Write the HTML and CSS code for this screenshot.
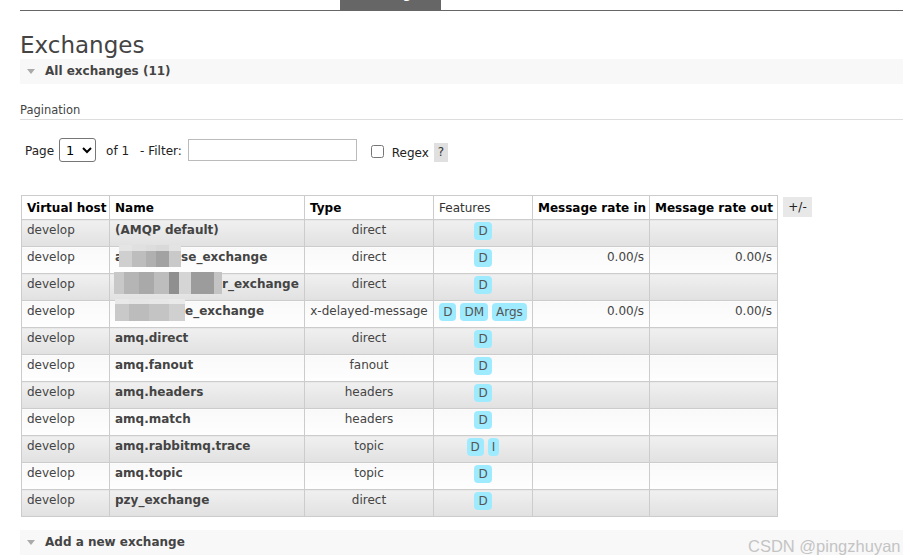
FILE: index.html
```html
<!DOCTYPE html>
<html>
<head>
<meta charset="utf-8">
<title>Exchanges</title>
<link rel="stylesheet" href="styles.css">
</head>
<body>
<nav class="topnav">
  <div class="nav-left"></div>
  <span class="tab active"><span class="tab-text">Exchanges</span></span>
  <span class="tab"><span class="tab-text">Queues and Streams</span></span>
</nav>
<main class="main">
  <h1 class="title">Exchanges</h1>
  <div class="section-bar"><span class="tri"></span><span>All exchanges (11)</span></div>
  <h3 class="pag-title">Pagination</h3>
  <div class="pag-row">
    <span class="lbl">Page</span>
    <select class="page-select"><option>1</option></select>
    <span class="of">of 1</span>
    <span class="filter-lbl">- Filter:</span>
    <input class="filter-input" type="text">
    <input class="regex-cb" type="checkbox">
    <span class="regex">Regex</span>
    <span class="help">?</span>
  </div>
  <div class="table-wrap">
    <table class="list">
      <colgroup>
        <col class="c-vhost"><col class="c-name"><col class="c-type"><col class="c-feat"><col class="c-rin"><col class="c-rout">
      </colgroup>
      <thead>
        <tr><th>Virtual host</th><th>Name</th><th>Type</th><th class="feat-h">Features</th><th>Message rate in</th><th>Message rate out</th></tr>
      </thead>
      <tbody>
        <tr class="alt1"><td class="vhost">develop</td><td class="name">(AMQP default)</td><td class="type">direct</td><td><div class="feats"><span class="badge">D</span></div></td><td class="rate"></td><td class="rate"></td></tr>
        <tr class="alt2"><td class="vhost">develop</td><td class="name">a<span class="mosaic m2"></span>se_exchange</td><td class="type">direct</td><td><div class="feats"><span class="badge">D</span></div></td><td class="rate">0.00/s</td><td class="rate">0.00/s</td></tr>
        <tr class="alt1"><td class="vhost">develop</td><td class="name"><span class="mosaic m3"></span>r_exchange</td><td class="type">direct</td><td><div class="feats"><span class="badge">D</span></div></td><td class="rate"></td><td class="rate"></td></tr>
        <tr class="alt2"><td class="vhost">develop</td><td class="name"><span class="mosaic m4"></span>e_exchange</td><td class="type">x-delayed-message</td><td><div class="feats"><span class="badge">D</span><span class="badge">DM</span><span class="badge">Args</span></div></td><td class="rate">0.00/s</td><td class="rate">0.00/s</td></tr>
        <tr class="alt1"><td class="vhost">develop</td><td class="name">amq.direct</td><td class="type">direct</td><td><div class="feats"><span class="badge">D</span></div></td><td class="rate"></td><td class="rate"></td></tr>
        <tr class="alt2"><td class="vhost">develop</td><td class="name">amq.fanout</td><td class="type">fanout</td><td><div class="feats"><span class="badge">D</span></div></td><td class="rate"></td><td class="rate"></td></tr>
        <tr class="alt1"><td class="vhost">develop</td><td class="name">amq.headers</td><td class="type">headers</td><td><div class="feats"><span class="badge">D</span></div></td><td class="rate"></td><td class="rate"></td></tr>
        <tr class="alt2"><td class="vhost">develop</td><td class="name">amq.match</td><td class="type">headers</td><td><div class="feats"><span class="badge">D</span></div></td><td class="rate"></td><td class="rate"></td></tr>
        <tr class="alt1"><td class="vhost">develop</td><td class="name">amq.rabbitmq.trace</td><td class="type">topic</td><td><div class="feats"><span class="badge">D</span><span class="badge">I</span></div></td><td class="rate"></td><td class="rate"></td></tr>
        <tr class="alt2"><td class="vhost">develop</td><td class="name">amq.topic</td><td class="type">topic</td><td><div class="feats"><span class="badge">D</span></div></td><td class="rate"></td><td class="rate"></td></tr>
        <tr class="alt1"><td class="vhost">develop</td><td class="name">pzy_exchange</td><td class="type">direct</td><td><div class="feats"><span class="badge">D</span></div></td><td class="rate"></td><td class="rate"></td></tr>
      </tbody>
    </table>
    <span class="plusminus">+/-</span>
  </div>
  <div class="section-bar bottom-bar"><span class="tri"></span><span>Add a new exchange</span></div>
</main>
<div class="watermark">CSDN @pingzhuyan</div>
</body>
</html>
```

FILE: styles.css
```css
* { box-sizing: border-box; }
html, body { margin: 0; padding: 0; background: #fff; }
body {
  font-family: "DejaVu Sans", Verdana, sans-serif;
  font-size: 12px;
  color: #444;
  position: relative;
  height: 559px;
  overflow: hidden;
}

/* top navigation (mostly scrolled out of view) */
.topnav {
  display: flex;
  margin-left: 20px;
  height: 11px;
  border-bottom: 1px solid #666;
  overflow: hidden;
  font-weight: bold;
  line-height: 17px;
  color: #444;
}
.nav-left { width: 320px; flex: none; }
.tab { display: block; height: 10px; padding: 0 20px; white-space: nowrap; overflow: hidden; }
.tab-text { display: block; margin-top: -14px; }
.tab.active { width: 101px; padding: 0; text-align: center; background: #666; color: #fff; }

.main { padding-left: 20px; }

.title {
  margin: 21px 0 0;
  font-size: 23px;
  line-height: 27px;
  font-weight: normal;
  color: #444;
}

.section-bar {
  display: flex;
  align-items: center;
  height: 25px;
  padding: 0 0 0 7px;
  background: #f8f8f8;
  font-weight: bold;
  line-height: 15px;
  color: #444;
}
.tri {
  width: 0; height: 0;
  border-left: 4px solid transparent;
  border-right: 4px solid transparent;
  border-top: 5px solid #aaa;
  margin-right: 10px;
}
.bottom-bar { margin-top: 13px; }

.pag-title {
  margin: 19px 0 0;
  font-size: 11.5px;
  line-height: 14px;
  padding-bottom: 2px;
  border-bottom: 1px solid #ddd;
  font-weight: normal;
  color: #444;
}

.pag-row {
  display: flex;
  align-items: center;
  height: 24px;
  margin: 18px 0 0 5px;
  color: #222;
  line-height: 17px;
}
.lbl, .of, .filter-lbl { margin-top: 2px; }
.page-select {
  margin: 0 0 0 5px;
  width: 37px;
  height: 24px;
  font-family: "DejaVu Sans", Verdana, sans-serif;
  font-size: 13px;
  border: 1px solid #767676;
  border-radius: 3px;
  background: #fff;
  color: #000;
  padding: 0 0 0 2px;
}
.of { margin-left: 10px; }
.filter-lbl { margin-left: 11px; }
.filter-input {
  margin: 0 0 0 6px;
  width: 169px;
  height: 22px;
  border: 1px solid #bbb;
  border-radius: 0;
  padding: 0 3px;
}
.regex-cb { margin: 3px 0 0 14px; width: 13px; height: 13px; }
.regex { margin: 6px 0 0 8px; }
.help {
  margin: 5px 0 0 5px;
  width: 14px;
  height: 19px;
  background: #e0e0e0;
  display: flex;
  align-items: center;
  justify-content: center;
  color: #333;
}

/* table */
.table-wrap {
  display: flex;
  align-items: flex-start;
  margin: 33px 0 0 1px;
}
table.list {
  border-collapse: collapse;
  table-layout: fixed;
  width: 756px;
  font-size: 12px;
}
.c-vhost { width: 88px; }
.c-name { width: 195px; }
.c-type { width: 129px; }
.c-feat { width: 99px; }
.c-rin { width: 117px; }
.c-rout { width: 128px; }

table.list th, table.list td {
  border: 1px solid #ccc;
  padding: 0 5px;
}
table.list th {
  height: 24px;
  line-height: 17px;
  background: #fff;
  color: #000;
  font-weight: bold;
  text-align: left;
  white-space: nowrap;
  vertical-align: middle;
  padding-top: 1px;
}
table.list th.feat-h { font-weight: normal; color: #333; }
table.list td {
  height: 27px;
  padding: 2px 5px 0;
  line-height: 17px;
  vertical-align: top;
  white-space: nowrap;
  color: #444;
}
.alt1 td { background: linear-gradient(#f0f0f0, #e1e1e1); }
.alt2 td { background: linear-gradient(#f9f9f9, #fefefe); }
td.vhost { color: #555; }
td.name { font-weight: bold; color: #000; }
td.type { text-align: center; }
td.rate { text-align: right; }

.feats { display: flex; justify-content: center; gap: 4px; margin-top: 0; }
.badge {
  display: block;
  background: #9eebff;
  color: #555;
  border-radius: 4px;
  padding: 0 4px;
  line-height: 18px;
  height: 18px;
  font-weight: normal;
}

.mosaic {
  display: inline-block;
  height: 22px;
  margin-top: -6px;
  margin-bottom: -6px;
  vertical-align: baseline;
}
.m2 {
  width: 62px;
  margin-left: -4px;
  background:
    linear-gradient(rgba(236,236,236,0.75) 0 6px, transparent 6px),
    linear-gradient(90deg, #cfcfcf 0 13px, #bdbdbd 13px 27px, #b0b0b0 27px 37px, #a2a2a2 37px 50px, #c9c9c9 50px);
}
.m3 {
  width: 108px;
  margin-left: -1px;
  background:
    linear-gradient(90deg, #c8c8c8 0 10px, #b5b5b5 10px 25px, #a9a9a9 25px 40px, #bdbdbd 40px 55px, #8f8f8f 55px 65px, #d5d5d5 65px 77px, #9c9c9c 77px 100px, #c4c4c4 100px);
}
.m4 {
  width: 70px;
  background:
    linear-gradient(rgba(240,240,240,0.8) 0 5px, transparent 5px),
    linear-gradient(90deg, #c9c9c9 0 14px, #bcbcbc 14px 34px, #c4c4c4 34px 54px, #d0d0d0 54px);
}

.plusminus {
  margin: 2px 0 0 5px;
  width: 29px;
  height: 20px;
  background: #e8e8e8;
  display: flex;
  align-items: center;
  justify-content: center;
  color: #222;
}

.watermark {
  position: absolute;
  left: 748px;
  top: 536px;
  font-family: "Liberation Sans", Arial, sans-serif;
  font-size: 16.5px;
  line-height: 20px;
  color: #c4c4c4;
  white-space: nowrap;
}
```
